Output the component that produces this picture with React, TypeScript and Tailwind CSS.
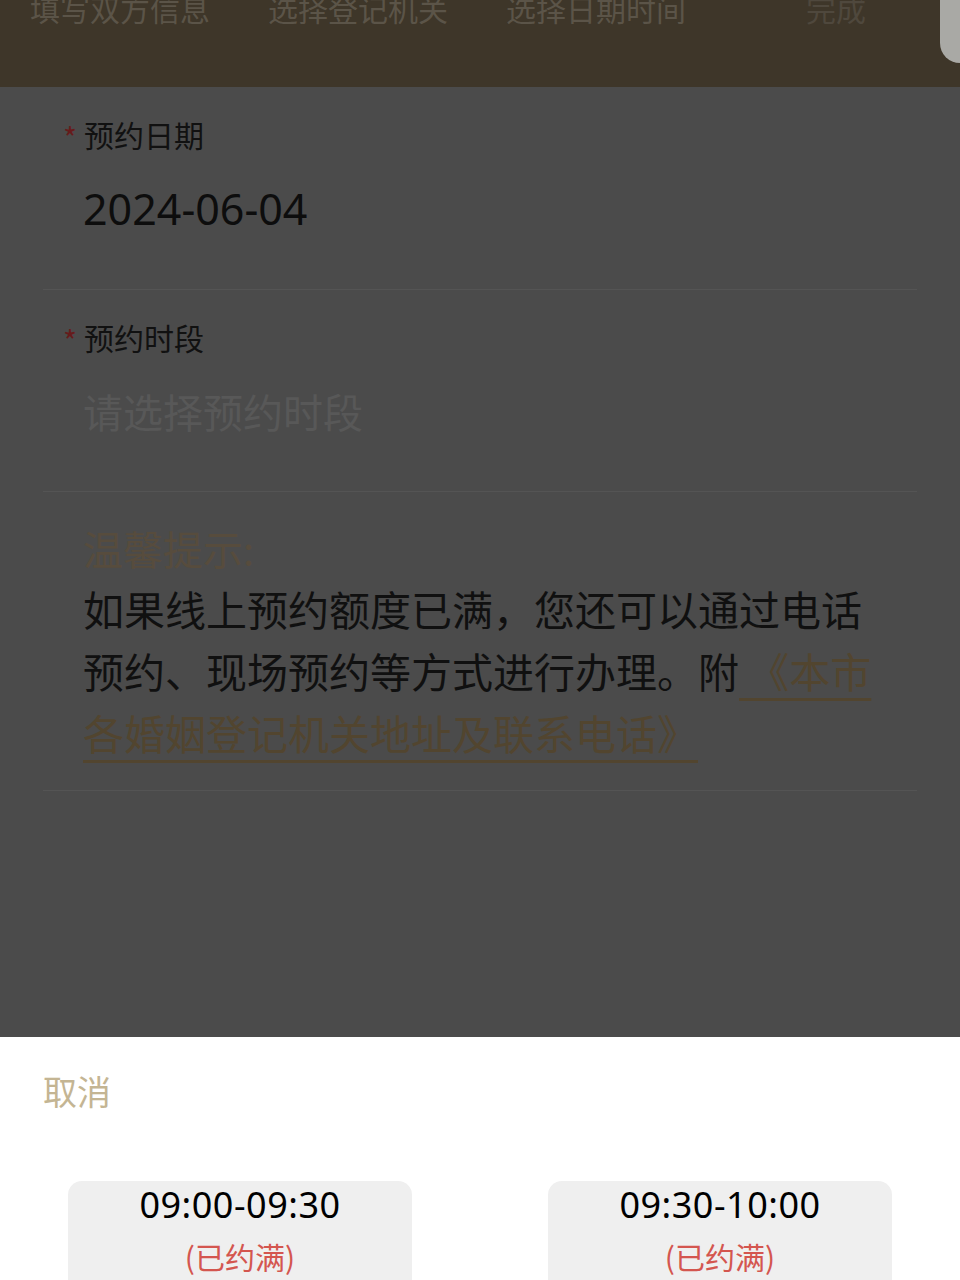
const cjk = { fontFamily: '"Noto Sans CJK SC", "Noto Sans", sans-serif' };
const num = { fontFamily: '"Noto Sans", "Noto Sans CJK SC", sans-serif' };

const steps = ["填写双方信息", "选择登记机关", "选择日期时间"];

const FieldLabel = ({ text }: { text: string }) => (
  <div className="flex h-[40px] items-center pl-[20px] text-[30px] leading-[40px] text-[#111]">
    <span className="mr-[7px] mt-[6px] text-[30px] leading-none text-[#661b1b]">*</span>
    <span>{text}</span>
  </div>
);

const SlotButton = ({ time }: { time: string }) => (
  <div className="flex h-[120px] w-[344px] flex-col items-center rounded-[14px] bg-[#efefef] pt-[2px]">
    <span className="text-[36px] leading-[44px] tracking-[0.5px] text-black" style={num}>
      {time}
    </span>
    <span className="mt-[9px] text-[30px] leading-[40px] text-[#d4564f]" style={cjk}>
      (已约满)
    </span>
  </div>
);

export default function App() {
  return (
    <div className="relative flex h-[1280px] w-[960px] flex-col overflow-hidden bg-white" style={cjk}>
      {/* step header, dimmed by overlay */}
      <div className="h-[87px] shrink-0 bg-[#3e3629]">
        <div className="-mt-[7px] flex items-start text-[30px] leading-[30px] text-[#5b5448]">
          <span className="ml-[30px]">{steps[0]}</span>
          <span className="ml-[58px]">{steps[1]}</span>
          <span className="ml-[58px]">{steps[2]}</span>
          <span className="ml-[120px] text-[#4f483d]">完成</span>
        </div>
      </div>

      {/* form body under the overlay */}
      <div className="flex flex-1 flex-col bg-[#4b4b4b]">
        <div className="mx-[43px] border-b border-[#545454] pb-[52px] pt-[27px]">
          <FieldLabel text="预约日期" />
          <div className="mt-[27px] pl-[40px] text-[43px] leading-[56px] text-[#0d0d0d]" style={num}>
            2024-06-04
          </div>
        </div>

        <div className="mx-[43px] border-b border-[#545454] pb-[52px] pt-[27px]">
          <FieldLabel text="预约时段" />
          <div className="mt-[26px] pl-[40px] text-[40px] leading-[56px] text-[#585858]">请选择预约时段</div>
        </div>

        <div className="mx-[43px] border-b border-[#545454] pb-[27px] pt-[27px]">
          <div className="pl-[40px] text-[40px] leading-[58px] text-[#574c3d]">温馨提示:</div>
          <p className="w-[840px] pl-[40px] text-[41px] leading-[62px] text-[#101010]">
            如果线上预约额度已满，您还可以通过电话预约、现场预约等方式进行办理。附
            <span className="text-[#52452f] underline decoration-[3px] underline-offset-[10px]">
              {" "}
              《本市各婚姻登记机关地址及联系电话》{" "}
            </span>
          </p>
        </div>
      </div>

      {/* bottom picker sheet */}
      <div className="h-[243px] shrink-0 bg-white">
        <div className="px-[43px] pt-[34px] text-[34px] leading-[40px] text-[#c4b593]">取消</div>
        <div className="mt-[70px] flex justify-between px-[68px]">
          <SlotButton time="09:00-09:30" />
          <SlotButton time="09:30-10:00" />
        </div>
      </div>

      {/* floating side handle */}
      <div className="absolute right-0 top-0 h-[63px] w-[20px] rounded-bl-[22px] bg-[#a9a9a5]" />
    </div>
  );
}
